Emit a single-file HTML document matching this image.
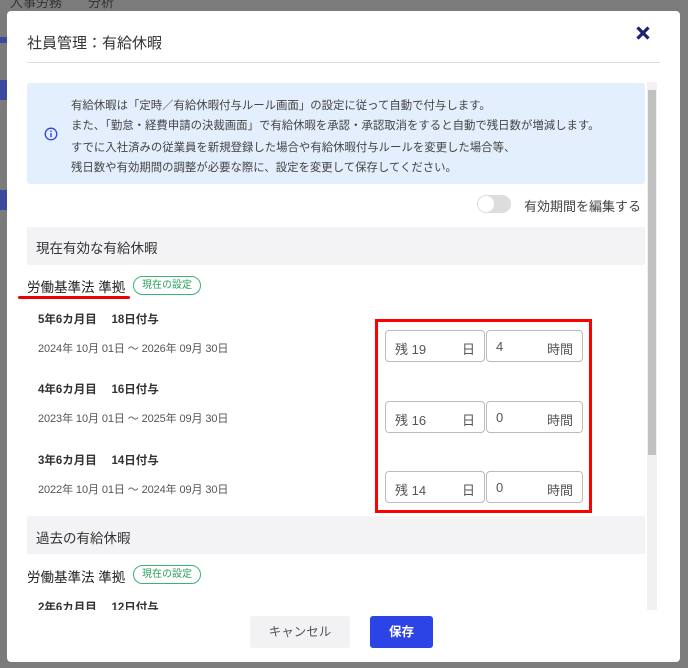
<!DOCTYPE html>
<html><head><meta charset="utf-8"><style>
*{margin:0;padding:0;box-sizing:border-box}
body{width:688px;height:668px;overflow:hidden;background:#7b7b7b;font-family:"Liberation Sans","Noto Sans CJK JP",sans-serif;color:#333;position:relative}
.a{position:absolute;white-space:nowrap}
.modal{position:absolute;left:7px;top:11px;width:673px;height:651px;background:#fff;border-radius:4px}
.hdr{background:#f3f3f5}
.badge{border:1px solid #3cb371;color:#2e9e5b;border-radius:10px;font-size:10px;height:19px;line-height:17px;padding:0 8px}
.inp{position:absolute;border:1px solid #bbb;border-radius:4px;height:32px;font-size:13px;color:#555}
.inp span{position:absolute;top:8px}
.dt{font-size:11px;color:#555;letter-spacing:-0.1px}
</style></head><body>
<div class="a" style="left:10px;top:-8px;font-size:13px;color:#333">人事労務　　分析</div>
<div class="a" style="left:0;top:37px;width:7px;height:6px;background:#3a4aa0"></div>
<div class="a" style="left:0;top:80px;width:7px;height:20px;background:#3a4aa0"></div>
<div class="a" style="left:0;top:190px;width:7px;height:20px;background:#3a4aa0"></div>
<div class="modal"></div>
<div class="a" style="left:27px;top:32px;font-size:15px;color:#333">社員管理：有給休暇</div>
<svg class="a" style="left:636px;top:26px" width="14" height="14" viewBox="0 0 14 14"><path d="M1.5 1.5L12.5 12.5M12.5 1.5L1.5 12.5" stroke="#1b2270" stroke-width="3.2"/></svg>
<div class="a" style="left:27px;top:62px;width:633px;height:1px;background:#ddd"></div>
<div class="a" style="left:27px;top:83px;width:618px;height:101px;background:#e3effd;border-radius:3px"></div>
<svg class="a" style="left:44px;top:127px" width="14" height="14" viewBox="0 0 14 14"><circle cx="7" cy="7" r="5.8" fill="none" stroke="#2c44e6" stroke-width="1.3"/><rect x="6.3" y="6" width="1.4" height="4.2" fill="#2c44e6"/><circle cx="7" cy="4.2" r=".8" fill="#2c44e6"/></svg>
<div class="a" style="left:71px;top:96px;font-size:11.4px;line-height:20px;color:#444">有給休暇は「定時／有給休暇付与ルール画面」の設定に従って自動で付与します。<br>また、「勤怠・経費申請の決裁画面」で有給休暇を承認・承認取消をすると自動で残日数が増減します。</div>
<div class="a" style="left:71px;top:138px;font-size:11.4px;line-height:20px;color:#444">すでに入社済みの従業員を新規登録した場合や有給休暇付与ルールを変更した場合等、<br>残日数や有効期間の調整が必要な際に、設定を変更して保存してください。</div>
<div class="a" style="left:477px;top:195px;width:34px;height:18px;border-radius:9px;background:#ddd"></div>
<div class="a" style="left:478px;top:196px;width:16px;height:16px;border-radius:8px;background:#fff"></div>
<div class="a" style="left:524px;top:196px;font-size:13px;color:#444">有効期間を編集する</div>
<div class="a" style="left:647px;top:82px;width:10px;height:528px;background:#f1f1f1"></div>
<div class="a" style="left:648px;top:90px;width:8px;height:365px;background:#c1c1c1"></div>
<div class="a hdr" style="left:27px;top:227px;width:618px;height:38px"></div>
<div class="a" style="left:36px;top:237px;font-size:13.5px;color:#333">現在有効な有給休暇</div>
<div class="a" style="left:27px;top:276px;font-size:13.5px;color:#222">労働基準法 準拠</div>
<div class="a badge" style="left:133px;top:276px">現在の設定</div>
<div class="a" style="left:18px;top:296px;width:112px;height:3px;background:#e00;border-radius:2px"></div>
<div class="a" style="left:38px;top:311px;font-size:11.5px;font-weight:bold;color:#333">5年6カ月目　 18日付与</div>
<div class="a dt" style="left:38px;top:340px">2024年 10月 01日 ～ 2026年 09月 30日</div>
<div class="a" style="left:38px;top:381px;font-size:11.5px;font-weight:bold;color:#333">4年6カ月目　 16日付与</div>
<div class="a dt" style="left:38px;top:410px">2023年 10月 01日 ～ 2025年 09月 30日</div>
<div class="a" style="left:38px;top:452px;font-size:11.5px;font-weight:bold;color:#333">3年6カ月目　 14日付与</div>
<div class="a dt" style="left:38px;top:481px">2022年 10月 01日 ～ 2024年 09月 30日</div>
<div class="a" style="left:375px;top:319px;width:217px;height:194px;border:3px solid #f00"></div>
<div class="inp" style="left:385px;top:330px;width:100px"><span style="left:9px">残 19</span><span style="right:9px">日</span></div>
<div class="inp" style="left:486px;top:330px;width:97px"><span style="left:9px">4</span><span style="right:9px">時間</span></div>
<div class="inp" style="left:385px;top:401px;width:100px"><span style="left:9px">残 16</span><span style="right:9px">日</span></div>
<div class="inp" style="left:486px;top:401px;width:97px"><span style="left:9px">0</span><span style="right:9px">時間</span></div>
<div class="inp" style="left:385px;top:471px;width:100px"><span style="left:9px">残 14</span><span style="right:9px">日</span></div>
<div class="inp" style="left:486px;top:471px;width:97px"><span style="left:9px">0</span><span style="right:9px">時間</span></div>
<div class="a hdr" style="left:27px;top:516px;width:618px;height:38px"></div>
<div class="a" style="left:36px;top:527px;font-size:13.5px;color:#333">過去の有給休暇</div>
<div class="a" style="left:27px;top:566px;font-size:13.5px;color:#222">労働基準法 準拠</div>
<div class="a badge" style="left:133px;top:565px">現在の設定</div>
<div class="a" style="left:27px;top:599px;width:618px;height:11px;overflow:hidden"><div style="position:absolute;left:11px;top:0;font-size:11.5px;font-weight:bold;color:#333">2年6カ月目　 12日付与</div></div>
<div class="a" style="left:250px;top:616px;width:100px;height:32px;background:#f2f2f4;border-radius:3px;font-size:12.5px;color:#555;text-align:center;line-height:32px">キャンセル</div>
<div class="a" style="left:370px;top:616px;width:63px;height:32px;background:#2c44e6;border-radius:3px;font-size:12.5px;font-weight:bold;color:#fff;text-align:center;line-height:32px">保存</div>
</body></html>
